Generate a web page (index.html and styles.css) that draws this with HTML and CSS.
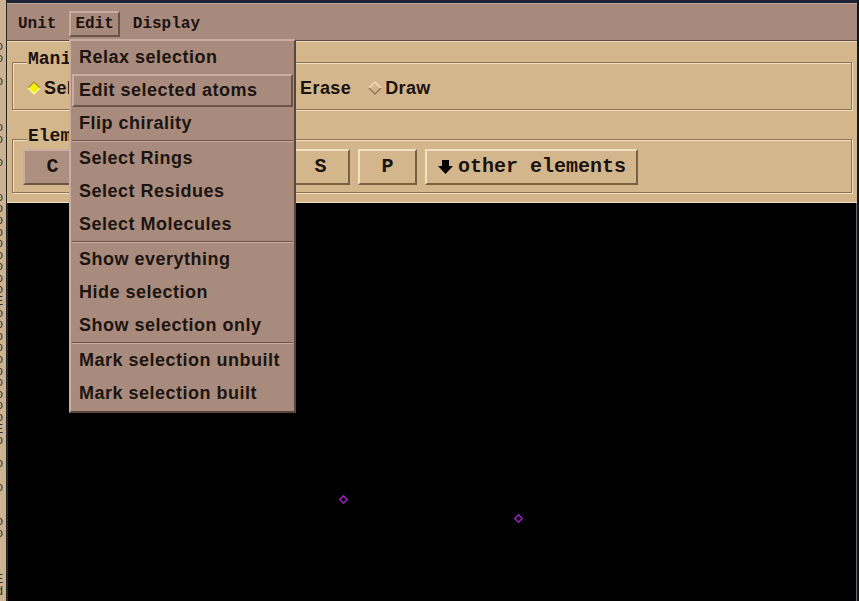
FILE: index.html
```html
<!DOCTYPE html>
<html>
<head>
<meta charset="utf-8">
<link rel="stylesheet" href="styles.css">
</head>
<body>
<div class="screen">
  <div class="side"><pre class="side-text">
o
o

o



o
o

o


o
o
o
o
o
o
o
o
o
E
o
o
o
o
o
o
o
o
o
o
E
o

o

o


o
o



E
d</pre></div>
  <div class="win">
    <div class="topedge"></div>
    <div class="menubar">
      <span class="mb-item">Unit</span>
      <span class="mb-item active">Edit</span>
      <span class="mb-item">Display</span>
    </div>
    <div class="panel">
      <div class="frame manip">
        <span class="frame-label">Manipulation</span>
        <div class="radio-row">
          <span class="radio"><svg class="dia" width="14" height="14" viewBox="0 0 14 14"><polygon points="7,1 13,7 7,13 1,7" fill="#f4f000"/><polyline points="1,7 7,1 13,7" fill="none" stroke="#a89040" stroke-width="1.2"/><polyline points="1,7 7,13 13,7" fill="none" stroke="#fffbb0" stroke-width="1.2"/></svg>Select</span>
          <span class="radio hidden-gap"><svg class="dia" width="14" height="14" viewBox="0 0 14 14"><polyline points="1,7 7,1 13,7" fill="none" stroke="#f6e6c8" stroke-width="1.2"/><polyline points="1,7 7,13 13,7" fill="none" stroke="#8c7050" stroke-width="1.2"/></svg>Twist</span>
          <span class="radio"><svg class="dia" width="14" height="14" viewBox="0 0 14 14"><polyline points="1,7 7,1 13,7" fill="none" stroke="#f6e6c8" stroke-width="1.2"/><polyline points="1,7 7,13 13,7" fill="none" stroke="#8c7050" stroke-width="1.2"/></svg>Erase</span>
          <span class="radio"><svg class="dia" width="14" height="14" viewBox="0 0 14 14"><polyline points="1,7 7,1 13,7" fill="none" stroke="#f6e6c8" stroke-width="1.2"/><polyline points="1,7 7,13 13,7" fill="none" stroke="#8c7050" stroke-width="1.2"/></svg>Draw</span>
        </div>
      </div>
      <div class="frame elems">
        <span class="frame-label">Elements</span>
        <div class="btn-row">
          <span class="btn sel">C</span>
          <span class="btn">N</span>
          <span class="btn">O</span>
          <span class="btn">H</span>
          <span class="btn">S</span>
          <span class="btn">P</span>
          <span class="btn wide"><svg class="arrow" width="15" height="14" viewBox="0 0 15 14"><path d="M4 0 H11 V6 H15 L7.5 14 L0 6 H4 Z" fill="#000"/></svg>other elements</span>
        </div>
      </div>
    </div>
    <div class="canvas">
      <svg class="atom a1" width="9" height="9" viewBox="0 0 9 9"><polygon points="4.5,0.8 8.2,4.5 4.5,8.2 0.8,4.5" fill="none" stroke="#a020c8" stroke-width="1.4"/></svg>
      <svg class="atom a2" width="9" height="9" viewBox="0 0 9 9"><polygon points="4.5,0.8 8.2,4.5 4.5,8.2 0.8,4.5" fill="none" stroke="#a020c8" stroke-width="1.4"/></svg>
    </div>
  </div>
</div>
<div class="menu">
  <div class="mi">Relax selection</div>
  <div class="mi hl">Edit selected atoms</div>
  <div class="mi">Flip chirality</div>
  <div class="sep"></div>
  <div class="mi">Select Rings</div>
  <div class="mi">Select Residues</div>
  <div class="mi">Select Molecules</div>
  <div class="sep"></div>
  <div class="mi">Show everything</div>
  <div class="mi">Hide selection</div>
  <div class="mi">Show selection only</div>
  <div class="sep"></div>
  <div class="mi">Mark selection unbuilt</div>
  <div class="mi">Mark selection built</div>
</div>
</body>
</html>
```

FILE: styles.css
```css
* { box-sizing: border-box; }
html, body { margin: 0; padding: 0; }
body {
  width: 859px;
  height: 601px;
  overflow: hidden;
  position: relative;
  background: #0b0d12;
  font-family: "Liberation Sans", Arial, sans-serif;
}
.screen { display: flex; height: 601px; }

.side {
  width: 7px;
  flex: none;
  background: #cbb292;
  border-right: 1px solid #2a241e;
  overflow: hidden;
  padding-top: 42px;
}
.side-text {
  margin: 0 0 0 -4px;
  font: 12px/11.6px "Liberation Mono", monospace;
  color: #3a2e22;
}

.win {
  flex: 1;
  display: flex;
  flex-direction: column;
  border-right: 2px solid #12161c;
}
.topedge { height: 3px; background: #1d2536; flex: none; }

.menubar {
  height: 38px;
  flex: none;
  background: #a88a7d;
  border-top: 1px solid #c2a698;
  border-bottom: 1px solid #5e4a40;
  display: flex;
  align-items: flex-start;
  gap: 7px;
  padding: 7px 0 0 5px;
}
.mb-item {
  font: bold 16px/22px "Liberation Mono", monospace;
  color: #1a1210;
  padding: 0 4px;
  border: 2px solid transparent;
}
.mb-item.active {
  border-color: #c8ada0 #6a5448 #6a5448 #c8ada0;
}

.panel {
  flex: none;
  height: 162px;
  background: #d4b68c;
  border-top: 1px solid #ecd8b6;
  border-bottom: 1px solid #eedcbc;
  padding: 20px 5px 0 5px;
  display: flex;
  flex-direction: column;
  gap: 29px;
}
.frame {
  position: relative;
  border: 1px solid #8e7452;
  box-shadow: inset 1px 1px 0 #f2e0c2, 1px 1px 0 #f2e0c2;
}
.frame.manip { height: 48px; }
.frame.elems { height: 54px; }
.frame-label {
  position: absolute;
  left: 14px;
  top: -13px;
  font: bold 18px/18px "Liberation Mono", monospace;
  color: #1a1210;
  background: #d4b68c;
  padding: 0 1px;
}

.radio-row {
  display: flex;
  align-items: center;
  height: 100%;
  padding: 4px 0 0 14px;
  gap: 17px;
}
.radio {
  display: flex;
  align-items: center;
  gap: 3px;
  font: bold 18px/20px "Liberation Sans", Arial, sans-serif;
  letter-spacing: 0.4px;
  color: #1a1210;
}
.radio.hidden-gap { margin-right: 86px; }
.dia { flex: none; }

.btn-row {
  display: flex;
  gap: 8px;
  padding: 9px 0 0 10px;
}
.btn {
  width: 59px;
  height: 36px;
  display: flex;
  align-items: center;
  justify-content: center;
  font: bold 20px/20px "Liberation Mono", monospace;
  color: #1a1210;
  background: #d4b68c;
  border: 2px solid;
  border-color: #f2e0c4 #7a6042 #7a6042 #f2e0c4;
}
.btn.sel { background: #ad8f80; border-color: #c8ada0 #6a5448 #6a5448 #c8ada0; }
.btn.wide { width: 213px; justify-content: flex-start; padding-left: 11px; gap: 5px; }
.arrow { flex: none; }

.canvas {
  flex: 1;
  position: relative;
  background: #000;
  border-left: 1px solid #2a2a2a;
  border-right: 1px solid #6a6a6a;
}
.atom { position: absolute; }
.a1 { left: 331px; top: 292px; }
.a2 { left: 506px; top: 311px; }

.menu {
  position: absolute;
  left: 69px;
  top: 39px;
  width: 227px;
  background: #a98b7d;
  border: 2px solid;
  border-color: #c8ada0 #5a463c #5a463c #c8ada0;
  padding: 0 0 1px 0;
}
.mi {
  height: 33px;
  margin: 0 1px;
  border: 2px solid transparent;
  padding-left: 5px;
  font: bold 18px/29px "Liberation Sans", Arial, sans-serif;
  letter-spacing: 0.5px;
  color: #1c1410;
  white-space: nowrap;
}
.mi.hl { border-color: #c8ada0 #6a5448 #6a5448 #c8ada0; }
.sep {
  height: 2px;
  margin: 0 1px;
  border-top: 1px solid #6a5448;
  border-bottom: 1px solid #c8ada0;
}
```
